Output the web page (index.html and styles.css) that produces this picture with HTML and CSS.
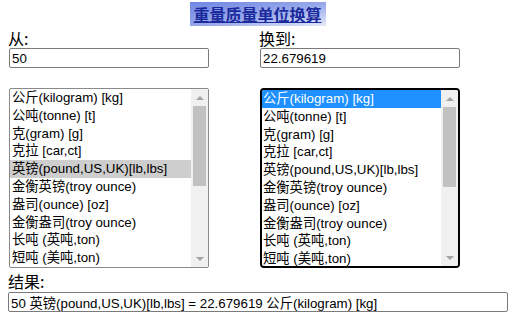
FILE: index.html
```html
<!DOCTYPE html>
<html lang="zh-CN">
<head>
<meta charset="utf-8">
<title>重量质量单位换算</title>
<link rel="stylesheet" href="styles.css">
</head>
<body>
<div class="page">
  <h1 class="title"><span class="title-text">重量质量单位换算</span></h1>
  <div class="cols">
    <div class="col">
      <label class="lbl">从:</label>
      <input class="field" type="text" value="50">
      <div class="list">
        <div class="opts">
          <div class="opt">公斤(kilogram) [kg]</div>
          <div class="opt">公吨(tonne) [t]</div>
          <div class="opt">克(gram) [g]</div>
          <div class="opt">克拉 [car,ct]</div>
          <div class="opt sel-inactive">英镑(pound,US,UK)[lb,lbs]</div>
          <div class="opt">金衡英镑(troy ounce)</div>
          <div class="opt">盎司(ounce) [oz]</div>
          <div class="opt">金衡盎司(troy ounce)</div>
          <div class="opt">长吨 (英吨,ton)</div>
          <div class="opt">短吨 (美吨,ton)</div>
        </div>
        <div class="sbar">
          <div class="sbtn"><span class="arr up"></span></div>
          <div class="track"><div class="thumb"></div></div>
          <div class="sbtn"><span class="arr down"></span></div>
        </div>
      </div>
    </div>
    <div class="col">
      <label class="lbl">换到:</label>
      <input class="field" type="text" value="22.679619">
      <div class="list focused">
        <div class="opts">
          <div class="opt sel-active">公斤(kilogram) [kg]</div>
          <div class="opt">公吨(tonne) [t]</div>
          <div class="opt">克(gram) [g]</div>
          <div class="opt">克拉 [car,ct]</div>
          <div class="opt">英镑(pound,US,UK)[lb,lbs]</div>
          <div class="opt">金衡英镑(troy ounce)</div>
          <div class="opt">盎司(ounce) [oz]</div>
          <div class="opt">金衡盎司(troy ounce)</div>
          <div class="opt">长吨 (英吨,ton)</div>
          <div class="opt">短吨 (美吨,ton)</div>
        </div>
        <div class="sbar">
          <div class="sbtn"><span class="arr up"></span></div>
          <div class="track"><div class="thumb"></div></div>
          <div class="sbtn"><span class="arr down"></span></div>
        </div>
      </div>
    </div>
  </div>
  <label class="lbl result-lbl">结果:</label>
  <input class="field result" type="text" value="50 英镑(pound,US,UK)[lb,lbs] = 22.679619 公斤(kilogram) [kg]">
</div>
</body>
</html>
```
FILE: styles.css
```css
* { box-sizing: border-box; }
html, body { margin: 0; padding: 0; background: #fff; }
body {
  font-family: "Liberation Sans", "Noto Sans CJK SC", sans-serif;
  color: #000;
}
.page {
  width: 511px;
  padding: 2px 3px 0 9px;
}
.title {
  margin: 0;
  text-align: center;
  font-size: 16px;
  line-height: 24px;
  height: 24px;
  padding-right: 1px;
}
.title-text {
  display: inline-block;
  padding: 0 4px 0 3px;
  height: 24px;
  font-family: "Noto Sans CJK SC", sans-serif;
  font-weight: bold;
  color: #1a2a9c;
  text-decoration: underline;
  background: linear-gradient(170deg, #6f86e4 0%, #9aaaea 55%, #e6e9f8 100%);
}
.cols {
  display: flex;
  gap: 51px;
}
.col {
  width: 200px;
  display: flex;
  flex-direction: column;
}
.lbl {
  display: block;
  font-family: "Noto Sans CJK SC", sans-serif;
  font-size: 16px;
  line-height: 20px;
  height: 20px;
  margin: 2px 0 0 -1px;
}
.field {
  display: block;
  width: 200px;
  height: 20px;
  border: 1px solid #7a7a7a;
  border-radius: 2px;
  padding: 0 2px;
  margin: 0;
  font-family: "Liberation Sans", "Noto Sans CJK SC", sans-serif;
  font-size: 13.3px;
  color: #000;
  background: #fff;
  outline: none;
}
.list {
  margin-top: 20px;
  width: 200px;
  height: 180px;
  border: 1px solid #8a8a8a;
  border-radius: 2px;
  display: flex;
  overflow: hidden;
  background: #fff;
}
.list.focused {
  border: 2px solid #000;
  border-radius: 4px;
}
.opts {
  flex: 1;
  min-width: 0;
}
.opt {
  height: 17.8px;
  line-height: 17.8px;
  padding-left: 2px;
  font-size: 13.3px;
  white-space: nowrap;
  overflow: hidden;
}
.focused .opt { padding-left: 1px; }
.sel-inactive { background: #cecece; }
.sel-active { background: #1e90ff; color: #fff; }
.sbar {
  width: 17px;
  flex: none;
  background: #f0f0f0;
  display: flex;
  flex-direction: column;
}
.sbtn {
  height: 17px;
  flex: none;
  display: flex;
  align-items: center;
  justify-content: center;
}
.track {
  flex: 1;
  padding: 0 2px;
}
.thumb {
  height: 80px;
  background: #c1c1c1;
}
.arr {
  width: 0;
  height: 0;
  border-left: 4px solid transparent;
  border-right: 4px solid transparent;
}
.arr.up { border-bottom: 4px solid #a3a3a3; }
.arr.down { border-top: 4px solid #a3a3a3; }
.result-lbl {
  margin-top: 3px;
}
.result {
  width: 500px;
  margin-left: -1px;
  margin-top: 1px;
}
```
